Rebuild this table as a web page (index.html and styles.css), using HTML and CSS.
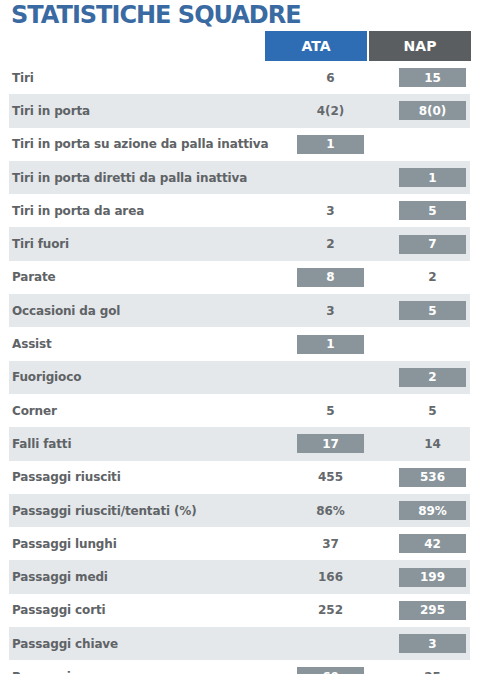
FILE: index.html
```html
<!DOCTYPE html>
<html lang="it">
<head>
<meta charset="utf-8">
<link rel="stylesheet" href="styles.css">
</head>
<body>
<div class="page">
  <h1 class="title">STATISTICHE SQUADRE</h1>
  <div class="head">
    <div class="team ata">ATA</div>
    <div class="team nap">NAP</div>
  </div>
  <div class="rows">
    <div class="row"><span class="label">Tiri</span><span class="val">6</span><span class="val bar">15</span></div>
    <div class="row alt"><span class="label">Tiri in porta</span><span class="val">4(2)</span><span class="val bar">8(0)</span></div>
    <div class="row"><span class="label">Tiri in porta su azione da palla inattiva</span><span class="val bar">1</span><span class="val"></span></div>
    <div class="row alt"><span class="label">Tiri in porta diretti da palla inattiva</span><span class="val"></span><span class="val bar">1</span></div>
    <div class="row"><span class="label">Tiri in porta da area</span><span class="val">3</span><span class="val bar">5</span></div>
    <div class="row alt"><span class="label">Tiri fuori</span><span class="val">2</span><span class="val bar">7</span></div>
    <div class="row"><span class="label">Parate</span><span class="val bar">8</span><span class="val">2</span></div>
    <div class="row alt"><span class="label">Occasioni da gol</span><span class="val">3</span><span class="val bar">5</span></div>
    <div class="row"><span class="label">Assist</span><span class="val bar">1</span><span class="val"></span></div>
    <div class="row alt"><span class="label">Fuorigioco</span><span class="val"></span><span class="val bar">2</span></div>
    <div class="row"><span class="label">Corner</span><span class="val">5</span><span class="val">5</span></div>
    <div class="row alt"><span class="label">Falli fatti</span><span class="val bar">17</span><span class="val">14</span></div>
    <div class="row"><span class="label">Passaggi riusciti</span><span class="val">455</span><span class="val bar">536</span></div>
    <div class="row alt"><span class="label">Passaggi riusciti/tentati (%)</span><span class="val">86%</span><span class="val bar">89%</span></div>
    <div class="row"><span class="label">Passaggi lunghi</span><span class="val">37</span><span class="val bar">42</span></div>
    <div class="row alt"><span class="label">Passaggi medi</span><span class="val">166</span><span class="val bar">199</span></div>
    <div class="row"><span class="label">Passaggi corti</span><span class="val">252</span><span class="val bar">295</span></div>
    <div class="row alt"><span class="label">Passaggi chiave</span><span class="val"></span><span class="val bar">3</span></div>
    <div class="row"><span class="label">Recuperi</span><span class="val bar">60</span><span class="val">25</span></div>
  </div>
</div>
</body>
</html>
```
FILE: styles.css
```css
* { box-sizing: border-box; }
html, body { margin: 0; padding: 0; background: #fff; }
body { font-family: "DejaVu Sans", "Noto Sans", sans-serif; overflow: hidden; }
.page { width: 491px; height: 674px; overflow: hidden; }
.title {
  margin: 0;
  padding: 0 0 0 11px;
  height: 31px;
  line-height: 30px;
  font-size: 24px;
  font-weight: 800;
  color: #3a6aa2;
  letter-spacing: -1px;
}
.head {
  display: flex;
  gap: 2px;
  padding-left: 265px;
  height: 30px;
}
.team {
  width: 102px;
  display: flex;
  align-items: center;
  justify-content: center;
  color: #fff;
  font-weight: 700;
  font-size: 14px;
}
.ata { background: #2e6db4; }
.nap { background: #5b5e61; }
.rows { width: 461px; margin-left: 9px; }
.row {
  display: grid;
  grid-template-columns: minmax(0, 1fr) 67px 67px;
  column-gap: 35px;
  align-items: center;
  height: 33.3px;
  padding: 0 4px 0 3px;
}
.row.alt { background: #e4e8eb; }
.label {
  font-size: 12px;
  font-weight: 700;
  color: #5f6366;
  white-space: nowrap;
  letter-spacing: -0.15px;
}
.val {
  height: 19px;
  display: flex;
  align-items: center;
  justify-content: center;
  font-size: 12px;
  font-weight: 700;
  color: #65696c;
}
.val.bar { background: #8a959b; color: #fff; }
```
